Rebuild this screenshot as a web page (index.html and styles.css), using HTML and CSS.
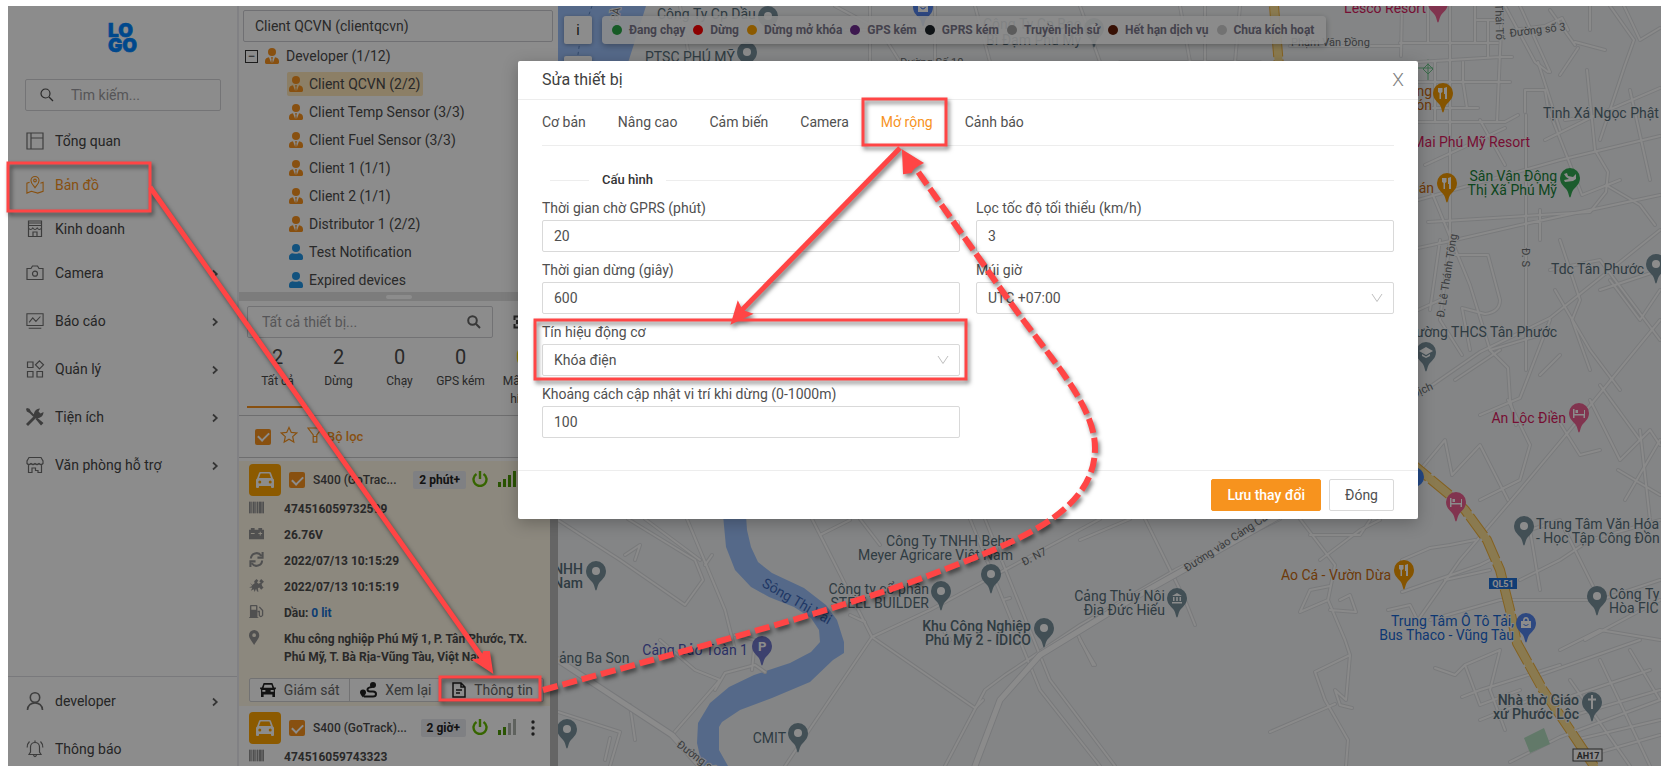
FILE: index.html
```html
<!DOCTYPE html>
<html lang="vi">
<head>
<meta charset="utf-8">
<title>Sửa thiết bị</title>
<link rel="stylesheet" href="styles.css">
</head>
<body>
<svg class="defs" aria-hidden="true">
  <symbol id="user-tie" viewBox="0 0 14 16"><circle cx="7" cy="4" r="4"/><path d="M4 9.2 6.2 15 6.6 11.3 5.9 9.3H8.1L7.4 11.3 7.8 15 10 9.2C12.600 9.500 14 11 14 13.200V14.600C14 15.500 13.500 16 12.600 16H1.400C.5 16 0 15.500 0 14.600V13.200C0 11 1.400 9.500 4 9.200Z"/></symbol>
  <symbol id="user" viewBox="0 0 14 16"><circle cx="7" cy="4" r="4"/><path d="M3.600 9.200C4.600 9.800 9.400 9.800 10.400 9.200 12.700 9.500 14 11 14 13.200V14.600C14 15.500 13.500 16 12.600 16H1.400C.5 16 0 15.500 0 14.600V13.200C0 11 1.300 9.500 3.600 9.200Z"/></symbol>
  <symbol id="chev" viewBox="0 0 8 10"><path d="M2 1.500 5.800 5 2 8.500" fill="none" stroke="currentColor" stroke-width="1.700"/></symbol>
  <symbol id="car" viewBox="0 0 18 16"><path fill-rule="evenodd" d="M4.500 0H13.500Q14.700 0 15 1L17 6.500Q18 7 18 8V15Q18 16 17 16H16Q15 16 15 15V14H3V15Q3 16 2 16H1Q0 16 0 15V8Q0 7 1 6.500L3 1Q3.300 0 4.500 0ZM4.600 1.500 3 6H15L13.400 1.500ZM3.800 8.500A1.500 1.500 0 1 0 3.800 11.500 1.500 1.500 0 1 0 3.800 8.500ZM14.200 8.500A1.500 1.500 0 1 0 14.200 11.500 1.500 1.500 0 1 0 14.200 8.500Z"/></symbol>
  <symbol id="power" viewBox="0 0 16 16"><path d="M4.500 3A6.500 6.500 0 1 0 11.500 3M8 0V8" fill="none" stroke="currentColor" stroke-width="2.400"/></symbol>
  <symbol id="barcode" viewBox="0 0 15 12"><path d="M0 0H1.500V12H0ZM2.500 0H3V12H2.500ZM4 0H5.500V12H4ZM6.500 0H7V12H6.500ZM8 0H9V12H8ZM10 0H12.500V12H10ZM13.500 0H15V12H13.500Z"/><path d="M0 0H15V12H0Z" opacity=".45"/></symbol>
  <symbol id="pin" viewBox="-11 -11 22 32" overflow="visible"><path d="M0 19.500C-1.200 19.500-1 15.500-3 12.300-5 9-10 6.500-10 0A10 10 0 0 1 10 0C10 6.500 5 9 3 12.300 1 15.500 1.200 19.500 0 19.500Z"/></symbol>
</svg>

<div class="app">
  <aside class="sidebar">
    <div class="logo">
      <svg width="32" height="32" viewBox="0 0 32 32" role="img" aria-label="Logo"><text x="1" y="15">LO</text><text x="1" y="30">GO</text></svg>
    </div>
    <label class="side-search">
      <svg width="14" height="14" viewBox="0 0 14 14" class="line"><circle cx="5.500" cy="5.500" r="4.500"/><path d="M9 9 13 13"/></svg>
      <input type="search" placeholder="Tìm kiếm..." aria-label="Tìm kiếm">
    </label>
    <nav class="menu">
      <a href="#"><svg width="18" height="18" viewBox="0 0 18 18" class="line"><path d="M1 1H17V17H1ZM5 1V17M5 6H17"/></svg><span>Tổng quan</span></a>
      <a href="#" class="active"><svg width="20" height="20" viewBox="0 0 20 20" class="line"><path d="M10 13C8.500 10.500 5.500 8.500 5.500 5A4.500 4.500 0 0 1 14.500 5C14.500 8.500 11.500 10.500 10 13Z"/><circle cx="10" cy="5" r="1.500"/><path d="M4 7 1 8V19L6 17 13 19 19 17V7L16 8"/></svg><span>Bản đồ</span></a>
      <a href="#"><svg width="18" height="18" viewBox="0 0 18 18" class="line"><path d="M2.500 1H15.500V5.500H2.500ZM2.500 3H15.500M2.500 5.500V16.500H15.500V5.500M2.500 8Q4.700 11 6.800 8 9 11 11.200 8 13.300 11 15.500 8M7 16.500V12H11V16.500"/></svg><span>Kinh doanh</span></a>
      <a href="#" class="last-short"><svg width="18" height="18" viewBox="0 0 18 18" class="line"><path d="M1 4.500H5L6.500 2H11.500L13 4.500H17V15.500H1Z"/><circle cx="9" cy="9.700" r="2.500"/></svg><span>Camera</span><svg class="chev"><use href="#chev"/></svg></a>
      <a href="#" class="tall"><svg width="20" height="18" viewBox="0 0 20 18" class="line"><path d="M1 1H19V14H1ZM3 17H17M3.500 10.500 7.500 5.500 11 9.500 16 4"/></svg><span>Báo cáo</span><svg class="chev"><use href="#chev"/></svg></a>
      <a href="#" class="tall"><svg width="18" height="18" viewBox="0 0 18 18" class="line"><path d="M1.500 2H7V7.500H1.500ZM1.500 11.500H7V17H1.500ZM11 11.500H16.500V17H11ZM13.500.8 17.500 4.800 13.500 8.800 9.500 4.800Z"/></svg><span>Quản lý</span><svg class="chev"><use href="#chev"/></svg></a>
      <a href="#" class="tall"><svg width="18" height="18" viewBox="0 0 18 18"><path d="M1 0 3.500.8 5 3.500 9 7.500 7.500 9 3.500 5 .8 3.500 0 1ZM11 9.500 17.500 15 15 17.500 9.500 11ZM0 16 8 8C7.500 4 9.500 1 14 .5L12.500 3.500 14.500 5.500 17.500 4C17.500 8 14.500 10.500 10 10L2 18Z"/></svg><span>Tiện ích</span><svg class="chev"><use href="#chev"/></svg></a>
      <a href="#" class="tall"><svg width="18" height="18" viewBox="0 0 18 18" class="line"><path d="M3 1.500H15L17 5V7.500Q15 9.500 13 7.500 11 9.500 9 7.500 7 9.500 5 7.500 3 9.500 1 7.500V5ZM2.500 9V16.500H6V12H9.500V14.500H12V16.500H15.500V9"/></svg><span>Văn phòng hỗ trợ</span><svg class="chev"><use href="#chev"/></svg></a>
    </nav>
    <nav class="menu bottom">
      <a href="#" class="tall"><svg width="18" height="18" viewBox="0 0 18 18" class="line bold"><circle cx="9" cy="5.500" r="4.700"/><path d="M1.500 18C1.500 8.500 16.500 8.500 16.500 18"/></svg><span>developer</span><svg class="chev"><use href="#chev"/></svg></a>
      <a href="#" class="tall"><svg width="18" height="18" viewBox="0 0 18 18" class="line"><path d="M3 14.500H15L13.500 12V7C13.500 1 4.500 1 4.500 7V12ZM7.500 15Q9 18.500 10.500 15M9 2V.5M3.500 1.500Q1 4 1.200 7.500M14.500 1.500Q17 4 16.800 7.500"/></svg><span>Thông báo</span></a>
    </nav>
  </aside>

  <section class="panel">
    <div class="tree-box">
      <input class="client-input" type="text" value="Client QCVN (clientqcvn)" aria-label="Khách hàng">
      <ul class="tree">
        <li class="root"><button class="expander" aria-label="Thu gọn">−</button><svg class="who"><use href="#user-tie"/></svg><span>Developer (1/12)</span></li>
        <li><div class="node selected"><svg class="who"><use href="#user-tie"/></svg><span>Client QCVN (2/2)</span></div></li>
        <li><div class="node"><svg class="who"><use href="#user-tie"/></svg><span>Client Temp Sensor (3/3)</span></div></li>
        <li><div class="node"><svg class="who"><use href="#user-tie"/></svg><span>Client Fuel Sensor (3/3)</span></div></li>
        <li><div class="node"><svg class="who"><use href="#user-tie"/></svg><span>Client 1 (1/1)</span></div></li>
        <li><div class="node"><svg class="who"><use href="#user-tie"/></svg><span>Client 2 (1/1)</span></div></li>
        <li><div class="node"><svg class="who"><use href="#user-tie"/></svg><span>Distributor 1 (2/2)</span></div></li>
        <li><div class="node"><svg class="who blue"><use href="#user"/></svg><span>Test Notification</span></div></li>
        <li><div class="node"><svg class="who blue"><use href="#user"/></svg><span>Expired devices</span></div></li>
      </ul>
    </div>
    <div class="splitter"><i></i></div>
    <div class="devices">
      <div class="device-main">
        <div class="device-search">
          <label class="device-input"><input type="search" placeholder="Tất cả thiết bị..." aria-label="Tất cả thiết bị">
            <svg width="14" height="14" viewBox="0 0 14 14"><circle cx="5.500" cy="5.500" r="4.300"/><path d="M8.800 8.800 13 13"/></svg></label>
          <svg width="20" height="14" viewBox="0 0 20 14" class="gear"><path d="M1.500 5V1.500H7M1.500 9V12.500H7M4 5V9M10 2V12"/></svg>
        </div>
        <div class="stats">
          <button class="on"><b>2</b><span>Tất cả</span></button>
          <button><b>2</b><span>Dừng</span></button>
          <button><b>0</b><span>Chạy</span></button>
          <button><b>0</b><span>GPS kém</span></button>
          <button class="warn"><b>0</b><span>Mất tín hiệu</span></button>
        </div>
        <div class="filters">
          <input type="checkbox" checked aria-label="Chọn tất cả">
          <svg width="18" height="18" viewBox="0 0 18 18"><path d="M9 1.500 11.300 6.400 16.700 7 12.700 10.600 13.800 16 9 13.300 4.200 16 5.300 10.600 1.300 7 6.700 6.400Z"/></svg>
          <svg width="16" height="16" viewBox="0 0 16 16"><path d="M1 1H15L9.800 8V15.200H6.200V8ZM6.200 9.500H9.800"/></svg>
          <span>Bộ lọc</span>
        </div>
        <article class="card chosen">
          <header>
            <span class="veh"><svg width="18" height="16"><use href="#car"/></svg></span>
            <input type="checkbox" id="d1" checked><label class="name" for="d1">S400 (GoTrac...</label>
            <span class="tag">2 phút+</span>
            <svg class="power"><use href="#power"/></svg>
            <svg class="signal" viewBox="0 0 18 16"><path d="M0 11H3V16H0ZM5 8H8V16H5ZM10 4H13V16H10ZM15 0H18V16H15Z"/></svg>
          </header>
          <dl>
            <dt><svg viewBox="0 0 15 12"><use href="#barcode"/></svg></dt><dd>474516059732599</dd>
            <dt><svg viewBox="0 0 16 12"><path d="M0 2H2V0H6V2H10V0H14V2H16V12H0ZM2 5.500V6.500H6V5.500ZM10 5.500V6.500H11.500V8H12.500V6.500H14V5.500H12.500V4H11.500V5.500Z" fill-rule="evenodd"/></svg></dt><dd>26.76V</dd>
            <dt><svg viewBox="0 0 16 16"><path d="M2 7A6 6 0 0 1 13 4M14 9A6 6 0 0 1 3 12M14.500 0V6H9M1.500 16V10H7" fill="none" stroke="currentColor" stroke-width="2.200"/></svg></dt><dd>2022/07/13 10:15:29</dd>
            <dt><svg viewBox="0 0 16 16"><path d="M1 5 3.500 7.500 6 5.500 5.500 3.500 8 1 10 3 8.500 4.500 10 6 12.500 5 11 3.500 13 1 16 4 13.500 6.500 14 8.500 15.500 10 13 12.500 11 10 9.500 11 10 15 8.500 14 7.500 11.500 6 15 5 12 2 13.500 3.500 10.500 0 10 3.500 8.500Z"/></svg></dt><dd>2022/07/13 10:15:19</dd>
            <dt><svg viewBox="0 0 16 16"><path fill-rule="evenodd" d="M1 2Q1 1 2 1H8Q9 1 9 2V14H10V15H0V14H1ZM2.500 2.500V6H7.500V2.500Z"/><path d="M9 8H11V12Q12.500 15 14.500 12V7L11 3" fill="none" stroke="currentColor" stroke-width="1.400"/></svg></dt><dd>Dầu: <a href="#">0 lit</a></dd>
            <dt><svg viewBox="0 0 16 16" class="loc"><path fill-rule="evenodd" d="M6 16C4 12 .5 9 .5 5.500A5.500 5.500 0 0 1 11.500 5.500C11.500 9 8 12 6 16ZM6 3.500A2 2 0 1 0 6 7.500 2 2 0 1 0 6 3.500Z"/></svg></dt><dd class="addr">Khu công nghiệp Phú Mỹ 1, P. Tân Phước, TX. Phú Mỹ, T. Bà Rịa-Vũng Tàu, Việt Nam</dd>
          </dl>
          <div class="actions">
            <button><svg width="16" height="14" viewBox="0 0 18 16"><path fill-rule="evenodd" d="M4 0H14L16 5H18V7H17V16H14V13H4V16H1V7H0V5H2ZM5 2 4 5.500H14L13 2ZM2.500 8V10H6V8ZM12 8V10H15.500V8Z"/></svg>Giám sát</button>
            <button><svg width="17" height="16" viewBox="0 0 17 16"><path d="M3 15.500Q0 12 0 10.500A3 3 0 0 1 6 10.500Q6 12 3 15.500Z"/><circle cx="13" cy="3" r="3"/><path d="M4 14.500H13Q16 14.500 16 12 16 9.500 13 9.500H10Q7.500 9.500 7.500 7.500 7.500 5.500 12 5" fill="none" stroke="currentColor" stroke-width="2"/></svg>Xem lại</button>
            <button><svg width="14" height="16" viewBox="0 0 14 16" class="line"><path d="M1 1H9L13 5V15H1ZM9 1V5H13M4 8H10M4 11H8"/></svg>Thông tin</button>
          </div>
        </article>
        <article class="card">
          <header>
            <span class="veh"><svg width="18" height="16"><use href="#car"/></svg></span>
            <input type="checkbox" id="d2" checked><label class="name" for="d2">S400 (GoTrack)...</label>
            <span class="tag">2 giờ+</span>
            <svg class="power"><use href="#power"/></svg>
            <svg class="signal" viewBox="0 0 18 16"><path d="M0 11H3V16H0ZM5 8H8V16H5Z"/><path class="off" d="M10 4H13V16H10ZM15 0H18V16H15Z"/></svg>
            <button class="more" aria-label="Thêm"><svg width="10" height="16" viewBox="0 0 10 16"><circle cx="5" cy="2" r="1.700"/><circle cx="5" cy="8" r="1.700"/><circle cx="5" cy="14" r="1.700"/></svg></button>
          </header>
          <dl><dt><svg viewBox="0 0 15 12"><use href="#barcode"/></svg></dt><dd>474516059743323</dd></dl>
        </article>
      </div>
      <div class="scrollbar"></div>
    </div>
  </section>

  <main class="map">
    <svg class="map-canvas" aria-label="Bản đồ">
      <defs>
        <g id="roads">
          <path d="M680 6 690 62M835 6 880 30 900 62M870 6V62M845 30H960M935 6V62M975 6 990 62M1080 6 1100 62M1180 6 1190 62M1120 62H1260M1205 6V62M1240 6 1235 62M1290 46H1400"/>
          <path d="M1450 6V240L1440 320 1462 355M1502 6 1497 122M1400 43H1498M1418 62 1500 57H1512M1418 82H1510M1418 108H1478M1418 122H1505L1518 115M1402 6 1401 56M1428 6V43M1435 62V122M1475 6V43M1488 20V57M1463 62V82L1467 108M1477 20H1498"/>
          <path d="M1505 6 1535 62 1548 72M1520 6 1550 72M1512 30 1545 26 1562 18 1568 30M1610 6 1634 40 1625 65 1600 140M1624 6 1640 40 1660 28M1550 10 1575 45M1578 48 1560 75M1590 6V30M1605 50 1575 42"/>
          <path d="M1660 88 1590 118 1545 140M1525 112V90H1545L1548 108 1582 195 1620 180M1526 115V370M1538 62 1560 130M1480 120 1505 165M1425 165 1505 128M1418 200 1560 160 1660 136M1428 222 1590 212 1606 192 1608 172 1595 150 1587 70M1606 185 1640 205 1655 225M1565 120 1620 112M1630 90 1650 180"/>
          <path d="M1418 248 1455 240 1520 225 1660 195M1430 188 1470 285 1490 350 1508 368 1510 400 1516 425M1455 255H1488L1500 300Q1500 312 1485 314L1462 308 1470 350M1418 310 1440 300M1440 240 1430 310M1540 210 1540 240M1560 240 1580 300 1572 320 1590 370"/>
          <path d="M1418 395 1480 352 1550 318 1660 230M1490 350 1540 335M1455 380 1500 350M1480 415 1520 398 1550 320M1420 470 1445 440 1452 475 1480 445 1508 500M1508 400 1530 445 1520 480 1480 500"/>
          <path d="M1418 620 1460 560 1520 490 1570 430 1660 320M1555 290 1590 350 1620 390M1540 375 1560 355M1550 270 1600 260 1660 340M1600 290 1660 270M1610 280 1640 320 1660 290M1590 400 1620 460M1600 385 1640 440M1555 415 1580 455 1600 450M1620 460 1650 430 1660 445M1625 500 1660 440M1618 470 1660 495M1640 430 1650 520"/>
          <path d="M1300 519 1335 565 1328 600 1345 640 1350 655 1315 672 1325 700 1348 740 1346 766M1350 655 1346 700 1335 690 1340 705 1352 708M1310 535H1360L1370 520M1320 560 1360 530 1380 520M1328 600 1300 612 1310 590 1330 586M1340 600 1350 595 1356 612 1330 610M1270 732 1335 704"/>
          <path d="M1402 560 1430 548 1450 545 1475 540M1402 592 1480 565 1490 560M1445 580 1490 570M1388 610 1410 605 1420 625M1430 620 1500 600H1600L1660 580M1520 580 1560 560 1590 540 1660 520M1540 590 1530 530 1560 520 1600 600M1585 640 1660 600M1560 650 1600 630 1660 640"/>
          <path d="M1435 668 1455 675 1465 665 1500 650M1465 665 1480 705 1520 690M1462 697 1480 690 1560 665M1480 720 1530 700M1500 650 1490 690 1505 730M1540 675 1640 640M1560 700 1650 670M1575 715 1660 690M1510 762 1560 737 1660 700M1575 740 1660 720M1590 755 1660 735M1600 660 1650 766M1630 650 1660 700M1570 680 1630 766"/>
          <path d="M558 520 620 560 685 605M628 519 695 560 703 580 685 605M645 519 700 560M635 560 640 545 625 555M687 519 725 610 735 650M705 565 712 555M660 640 695 670 720 680M715 690 725 673 755 665 765 672M735 635 755 640 752 670M672 735 720 680M558 712 620 732 610 766M630 705 635 740M610 738 605 760"/>
          <path d="M812 519 872 637 975 708 983 700M820 535 850 520M872 637 930 610 1100 519M785 766 872 637M970 519 1040 690 1100 766M985 519 1050 680 1115 766M850 615 865 622M950 640 940 625M1003 600 1010 598M860 519 880 545M1078 635 1093 665"/>
          <path d="M945 766 985 690 1005 675 1080 625 1175 570 1280 519M1145 519 1185 600 1195 625M1080 540 1130 519M1080 640 1095 665"/>
        </g>
      </defs>
      <g transform="translate(-558 -6)">
        <path class="water" d="M558 6H646L627 66H558ZM723 515 726 547 735 570 751 587 769 597 794 607 811 618 819 630 820 642 811 652 790 663 754 675 729 687 710 703 698 723 697 743 702 766H728L719 750V727L722 722 740 710 772 698 810 682 833 660 844 653V642L837 620 826 605 804 588 772 573 758 562 751 547 747 530 746 515Z"/>
        <path d="M592 6 580 40 577 62" class="ferry"/>
        <path class="park-line" d="M1418 68H1434M1428 59V80M1428 64 1433 69 1428 74 1423 69Z"/>
        <use href="#roads" class="casing"/><use href="#roads" class="road"/>
        <path class="park" d="M1524 738 1544 728 1550 744 1530 753Z"/>
        <g class="main-casing"><path d="M558 660 672 735 700 766M975 766 1000 700 1040 655 1130 600 1180 572 1290 510"/></g>
        <g class="main-road"><path d="M558 660 672 735 700 766M975 766 1000 700 1040 655 1130 600 1180 572 1290 510"/></g>
        <path class="hw-edge" d="M1274 6 1279 66M1410 462 1452 497 1465 510 1487 540 1500 570 1510 610 1517 643 1543 690 1570 730 1594 766"/>
        <path class="hw" d="M1274 6 1279 66M1410 462 1452 497 1465 510 1487 540 1500 570 1510 610 1517 643 1543 690 1570 730 1594 766"/>
        <circle cx="1414" cy="477" r="10" fill="#4285f4"/>

        <g class="pins slate">
          <g transform="translate(768 16)"><use href="#pin" x="-11" y="-11" width="22" height="32"/><circle r="4"/></g>
          <g transform="translate(747 52)"><use href="#pin" x="-11" y="-11" width="22" height="32"/><circle r="4"/></g>
          <g transform="translate(1094 28)"><use href="#pin" x="-11" y="-11" width="22" height="32"/><circle r="4"/></g>
          <g transform="translate(596 571)"><use href="#pin" x="-11" y="-11" width="22" height="32"/><circle r="4"/></g>
          <g transform="translate(567 729)"><use href="#pin" x="-11" y="-11" width="22" height="32"/><circle r="4"/></g>
          <g transform="translate(798 733)"><use href="#pin" x="-11" y="-11" width="22" height="32"/><circle r="4"/></g>
          <g transform="translate(941 591)"><use href="#pin" x="-11" y="-11" width="22" height="32"/><circle r="4"/></g>
          <g transform="translate(991 574)"><use href="#pin" x="-11" y="-11" width="22" height="32"/><circle r="4"/></g>
          <g transform="translate(1044 628)"><use href="#pin" x="-11" y="-11" width="22" height="32"/><circle r="4"/></g>
          <g transform="translate(1524 526)"><use href="#pin" x="-11" y="-11" width="22" height="32"/><circle r="4"/></g>
          <g transform="translate(1597 596)"><use href="#pin" x="-11" y="-11" width="22" height="32"/><circle r="4"/></g>
          <g transform="translate(1656 264)"><use href="#pin" x="-11" y="-11" width="22" height="32"/><circle r="4"/></g>
          <g transform="translate(1177 598)"><use href="#pin" x="-11" y="-11" width="22" height="32"/><path d="M-5-2 0-5 5-2ZM-5 4H5V5.500H-5ZM-4-1H-2.500V3H-4ZM-.8-1H.8V3H-.8ZM2.500-1H4V3H2.500Z"/></g>
          <g transform="translate(1426 352)"><use href="#pin" x="-11" y="-11" width="22" height="32"/><path d="M-7-1 0-5 7-1 0 3ZM-4 2 0 4.500 4 2V4L0 6-4 4Z"/></g>
          <g transform="translate(1592 702)"><use href="#pin" x="-11" y="-11" width="22" height="32"/><path d="M-1-7H1V-3.500H4V-1.500H1V7H-1V-1.500H-4V-3.500H-1Z"/></g>
        </g>
        <g class="pins pink">
          <g transform="translate(1438 3)"><use href="#pin" x="-11" y="-11" width="22" height="32"/></g>
          <g transform="translate(1579 413)"><use href="#pin" x="-11" y="-11" width="22" height="32"/><path d="M-6-4H-4.500V1H5V-3H-1V0H-3.500V-3H6V5H4.500V2.500H-4.500V5H-6Z"/></g>
          <g transform="translate(1456 502)"><use href="#pin" x="-11" y="-11" width="22" height="32"/><path d="M-6-4H-4.500V1H5V-3H-1V0H-3.500V-3H6V5H4.500V2.500H-4.500V5H-6Z"/></g>
        </g>
        <g class="pins orange">
          <g transform="translate(1443 93)"><use href="#pin" x="-11" y="-11" width="22" height="32"/><path d="M-5-5H-.5V-1L-2 0V6H-3.500V0L-5-1ZM1-5 4-6V6H2V1H1Z"/></g>
          <g transform="translate(1447 183)"><use href="#pin" x="-11" y="-11" width="22" height="32"/><path d="M-5-5H-.5V-1L-2 0V6H-3.500V0L-5-1ZM1-5 4-6V6H2V1H1Z"/></g>
          <g transform="translate(1404 570)"><use href="#pin" x="-11" y="-11" width="22" height="32"/><path d="M-5-5H-.5V-1L-2 0V6H-3.500V0L-5-1ZM1-5 4-6V6H2V1H1Z"/></g>
        </g>
        <g class="pins green"><g transform="translate(1570 178)"><use href="#pin" x="-11" y="-11" width="22" height="32"/><path d="M-6-4-3-5-2-2 3-1 6-4V1L3 3-5 4-6 2-1 1-4-1Z"/></g></g>
        <g class="pins blue"><g transform="translate(1526 623)"><use href="#pin" x="-11" y="-11" width="22" height="32"/><path fill-rule="evenodd" d="M-5-2H-3Q-3-6 0-6T3-2H5V5H-5ZM-1.500-2H1.500Q1.500-4.500 0-4.500T-1.500-2ZM-3 1Q0 5 3 1H2Q0 3-2 1Z"/></g>
          <g transform="translate(923 7)"><use href="#pin" x="-11" y="-11" width="22" height="32"/><path fill-rule="evenodd" d="M-5-3H5V5H-5ZM-3 0Q0 5 3 0H2Q0 2.500-2 0Z"/></g></g>
        <g class="pins indigo"><g transform="translate(762 646)"><use href="#pin" x="-11" y="-11" width="22" height="32"/><text x="-4" y="5">P</text></g></g>

        <g class="labels">
          <text x="657" y="19">Công Ty Cp Dầu</text><text x="645" y="62">PTSC PHÚ MỸ</text>
          <text x="983" y="29">Công Ty Cp Bao</text><text x="986" y="45">Bì Đạm Phú Mỹ</text>
          <text x="583" y="574" class="end b">NHH</text><text x="583" y="588" class="end b">Nam</text>
          <text x="559" y="663">ảng Ba Son</text><text x="786" y="743" class="end">CMIT</text>
          <text x="1013" y="546" class="end">Công Ty TNHH Behn</text><text x="1013" y="560" class="end">Meyer Agricare Việt Nam</text>
          <text x="929" y="594" class="end">Công ty cổ phần</text><text x="929" y="608" class="end">STEEL BUILDER</text>
          <text x="1031" y="631" class="end b">Khu Công Nghiệp</text><text x="1031" y="645" class="end b">Phú Mỹ 2 - IDICO</text>
          <text x="1165" y="601" class="end">Cảng Thủy Nội</text><text x="1165" y="615" class="end">Địa Đức Hiếu</text>
          <text x="1543" y="118">Tịnh Xá Ngọc Phật</text><text x="1644" y="274" class="end">Tdc Tân Phước</text>
          <text x="1557" y="337" class="end">Trường THCS Tân Phước</text>
          <text x="1536" y="529">Trung Tâm Văn Hóa</text><text x="1536" y="543">- Học Tập Công Đồn</text>
          <text x="1609" y="599">Công Ty</text><text x="1609" y="613">Hòa FIC</text>
          <text x="1579" y="705" class="end b">Nhà thờ Giáo</text><text x="1579" y="719" class="end b">xứ Phước Lộc</text>
          <g class="t-pink"><text x="1426" y="13" class="end">Lesco Resort</text><text x="1530" y="147" class="end">Mai Phú Mỹ Resort</text><text x="1566" y="423" class="end">An Lộc Điền</text></g>
          <g class="t-orange"><text x="1432" y="96" class="end">ng</text><text x="1432" y="110" class="end">ón</text><text x="1434" y="193" class="end">Quán</text><text x="1391" y="580" class="end">Ao Cá - Vườn Dừa</text></g>
          <g class="t-green"><text x="1557" y="181" class="end">Sân Vận Động</text><text x="1557" y="195" class="end">Thị Xã Phú Mỹ</text></g>
          <g class="t-blue"><text x="1514" y="626" class="end">Trung Tâm Ô Tô Tải,</text><text x="1514" y="640" class="end">Bus Thaco - Vũng Tàu</text></g>
          <g class="t-indigo"><text x="748" y="655" class="end">Cảng Bảo Toàn 1</text></g>
          <g class="t-water"><text transform="translate(761 586) rotate(30)">Sông Thị Vải</text></g>
          <g class="street">
            <text x="900" y="66">Đường Số 10</text><text x="1291" y="46">Phạm Văn Đồng</text>
            <text transform="translate(618 22) rotate(-80)">BÀ</text>
            <text transform="translate(1510 37) rotate(-7)">Đường số 3</text><text transform="translate(1495 4) rotate(88)">Thái Tổ</text>
            <text transform="translate(1522 248) rotate(90)">Đ. S</text><text transform="translate(1444 318) rotate(-81)">Đ. Lê Thánh Tông</text>
            <text transform="translate(1414 398) rotate(-25)">Dịch</text><text transform="translate(1187 572) rotate(-33)">Đường vào Cảng Cái Mép</text>
            <text transform="translate(1024 566) rotate(-27)">Đ. N7</text><text transform="translate(676 746) rotate(37)">Đường số 3</text>
          </g>
        </g>
        <rect x="1489" y="578" width="28" height="11" fill="#1f6fd6"/><text x="1503" y="587" class="shield">QL51</text>
        <rect x="1573" y="749" width="29" height="12" fill="#fff" stroke="#444"/><text x="1588" y="759" class="shield dark">AH17</text>
      </g>
    </svg>
    <div class="map-top">
      <div class="map-tools"><button>i</button><button aria-label="Lớp bản đồ"></button></div>
      <ul class="legend">
        <li><i class="c-green"></i>Đang chạy</li><li><i class="c-red"></i>Dừng</li><li><i class="c-amber"></i>Dừng mở khóa</li><li><i class="c-purple"></i>GPS kém</li><li><i class="c-black"></i>GPRS kém</li><li><i class="c-gray"></i>Truyền lịch sử</li><li><i class="c-brown"></i>Hết hạn dịch vụ</li><li><i class="c-light"></i>Chưa kích hoạt</li>
      </ul>
    </div>
  </main>

  <div class="mask">
    <form class="modal" role="dialog" aria-labelledby="dlg-title">
      <header><h1 id="dlg-title">Sửa thiết bị</h1><button type="button" aria-label="Đóng hộp thoại">X</button></header>
      <div class="body">
        <div class="tabs" role="tablist">
          <button type="button" role="tab">Cơ bản</button><button type="button" role="tab">Nâng cao</button><button type="button" role="tab">Cảm biến</button><button type="button" role="tab">Camera</button><button type="button" role="tab" aria-selected="true">Mở rộng</button><button type="button" role="tab">Cảnh báo</button>
        </div>
        <h2>Cấu hình</h2>
        <div class="fields">
          <div class="field"><label for="f1">Thời gian chờ GPRS (phút)</label><input id="f1" type="text" value="20"></div>
          <div class="field"><label for="f2">Lọc tốc độ tối thiểu (km/h)</label><input id="f2" type="text" value="3"></div>
          <div class="field"><label for="f3">Thời gian dừng (giây)</label><input id="f3" type="text" value="600"></div>
          <div class="field"><label for="f4">Múi giờ</label><div class="select"><select id="f4"><option>UTC +07:00</option></select><svg width="12" height="12" viewBox="0 0 12 12"><path d="M1 2 6 9.500 11 2"/></svg></div></div>
          <div class="field first"><label for="f5">Tín hiệu động cơ</label><div class="select"><select id="f5"><option>Khóa điện</option></select><svg width="12" height="12" viewBox="0 0 12 12"><path d="M1 2 6 9.500 11 2"/></svg></div></div>
          <div class="field first"><label for="f6">Khoảng cách cập nhật vi trí khi dừng (0-1000m)</label><input id="f6" type="text" value="100"></div>
        </div>
      </div>
      <footer><button type="submit" class="primary">Lưu thay đổi</button><button type="button">Đóng</button></footer>
    </form>
  </div>
</div>

<svg class="notes" aria-hidden="true">
  <g class="frames">
    <rect x="8" y="163" width="142" height="48"/><rect x="863" y="99" width="83" height="46"/>
    <rect x="535" y="320" width="431" height="59"/><rect x="440" y="677" width="100" height="23"/>
  </g>
  <g class="lines">
    <path d="M150 187 483 659"/><path d="M900 148 740 312"/>
    <path class="dash" d="M543 690C700 647 850 606 930 575S1095 515 1095 448C1095 405 1050 358 1010 302L914 166"/>
  </g>
  <g class="heads"><path d="M492 672 474 660 481 659 484 652 489 652Z"/><path d="M732 323 738 303 742 311 751 314Z"/><path d="M903 151 922 163 914 167 911 172 904 173Z"/></g>
</svg>
</body>
</html>
```
FILE: styles.css
```css
* { box-sizing: border-box; }
body { margin: 0; padding: 6px 5px 6px 8px; height: 100vh; background: #fff; font: 14px/22px Roboto, "Noto Sans", sans-serif; color: #4c4c4c; }
button, input, select { font: inherit; color: inherit; margin: 0; }
button { cursor: pointer; }
ul, dl, dd, h1, h2 { margin: 0; padding: 0; list-style: none; font-weight: 400; }
svg { flex: none; fill: currentColor; display: block; }
.defs { position: absolute; width: 0; height: 0; }
.line { fill: none; stroke: currentColor; stroke-width: 1.2; }
.line.bold { stroke-width: 1.6; }

.app { position: relative; height: 100%; display: flex; overflow: hidden; background: #fff; }

/* sidebar */
.sidebar { width: 231px; flex: none; display: flex; flex-direction: column; border-right: 2px solid #ececf0; }
.logo { display: flex; justify-content: center; padding: 16px 0 25px; color: #0084ff; }
.logo svg { overflow: visible; }
.logo text { font: 900 19px Inter, sans-serif; stroke: currentColor; stroke-width: 0.6; }
.side-search { display: flex; align-items: center; gap: 12px; height: 32px; margin: 0 16px 8px 17px; padding: 0 14px; border: 1px solid #d4d4d8; border-radius: 2px; }
.side-search input { width: 100%; border: 0; background: none; outline: 0; padding: 0 5px; }
::placeholder { color: #9c9ca0; opacity: 1; }
.menu { display: flex; flex-direction: column; }
.menu a { display: flex; flex: none; align-items: center; gap: 11px; height: 44px; padding: 0 18px; color: #454545; text-decoration: none; }
.menu a > svg:first-child { width: 18px; color: #707070; overflow: visible; }
.menu a span { flex: 1; }
.menu a.active, .menu a.active > svg:first-child { color: #f7931e; }
.menu .last-short { margin-bottom: 2px; }
.menu a.tall { height: 48px; }
.menu .chev { width: 8px; height: 10px; margin-top: 2px; color: #606060; }
.menu.bottom { margin-top: auto; height: 90px; flex: none; border-top: 1px solid #dddde2; }

/* client tree and devices */
.panel { width: 319px; flex: none; display: flex; flex-direction: column; }
.tree-box { height: 286px; flex: none; padding: 4px 5px 0 4px; overflow: hidden; }
.client-input { width: 100%; height: 32px; padding: 0 11px; border: 1px solid #ccccd2; border-radius: 2px; background: none; }
.tree li { display: flex; align-items: center; height: 28px; padding-left: 44px; }
.tree .root { padding-left: 2px; gap: 7px; }
.expander { width: 13px; height: 13px; padding: 0; border: 1px solid #333; background: none; line-height: 9px; }
.node { display: flex; align-items: center; gap: 6px; height: 24px; padding: 0 3px 0 2px; border-radius: 2px; }
.node.selected { background: #ffe7ba; }
.who { width: 14px; height: 16px; color: #f7931e; }
.who.blue { color: #2295e6; }
.splitter { height: 9px; flex: none; display: grid; place-items: center; background: #e2e2e2; }
.splitter i { width: 26px; height: 4px; border-radius: 2px; background: #fff; }
.devices { flex: 1; min-height: 0; display: flex; }
.device-main { flex: 1; min-width: 0; overflow: hidden; }
.scrollbar { width: 8px; background: #b9b9b9; }
.device-search { display: flex; align-items: center; gap: 20px; padding: 5px 8px 0; }
.device-input { width: 246px; flex: none; height: 32px; display: flex; align-items: center; padding: 0 11px 0 14px; border: 1px solid #d0d0d4; border-radius: 2px; }
.device-input input { width: 100%; border: 0; background: none; outline: 0; padding: 0; }
.device-input svg { fill: none; stroke: #666; stroke-width: 2; }
.gear { fill: none; stroke: #444; stroke-width: 2; }
.stats { display: flex; height: 78px; padding: 5px 8px 7px; border-bottom: 1px solid #c8c8ca; }
.stats button { width: 61px; flex: none; padding: 4px 6px 0; border: 0; border-bottom: 2px solid transparent; background: none; display: flex; flex-direction: column; font-size: 12px; line-height: 18px; }
.stats b { font-size: 20px; line-height: 20px; font-weight: 400; margin-bottom: 5px; }
.stats span, .stats b { width: 100%; text-align: center; }
.stats .on { border-color: #f7931e; }
.stats .warn b { color: #fadb14; }
.stats span { white-space: nowrap; }
.stats .warn span { white-space: normal; }
.filters { display: flex; align-items: center; gap: 9px; height: 42px; padding: 0 16px; border-bottom: 1px solid #c8c8ca; color: #f7931e; font-weight: 500; font-size: 13px; }
.filters svg { fill: none; stroke: currentColor; stroke-width: 1.2; margin-bottom: 4px; }
.filters span { margin-left: -5px; }
input[type=checkbox] { appearance: none; flex: none; width: 16px; height: 16px; border-radius: 2px; background: #f7931e; display: grid; place-items: center; }
input[type=checkbox]::after { content: ""; width: 5px; height: 9px; margin-top: -2px; border: solid #fff; border-width: 0 2px 2px 0; rotate: 45deg; }
.card { padding: 6px 6px 4px 10px; font-size: 12px; line-height: 18px; font-weight: 500; }
.card.chosen { margin-top: 3px; padding-top: 3px; background: #fff7e6; }
.card header { display: flex; align-items: center; height: 32px; gap: 8px; }
.veh { width: 32px; height: 32px; border-radius: 4px; background: #ffa500; color: #fff; display: grid; place-items: center; }
.name { flex: 1; white-space: nowrap; }
.tag { padding: 0 6px; border-radius: 2px; background: #e8e9ee; color: #222; font-weight: 700; margin-right: -2px; }
.power { width: 16px; height: 16px; color: #63b900; margin: 0 2px 2px 0; }
.signal { width: 18px; height: 16px; fill: #4e9a06; margin: 0 28px 2px 0; }
.signal .off { fill: #aeb3ac; }
.signal:not(:last-child) { margin-right: 4px; }
.more { width: 10px; margin-right: 6px; padding: 0; border: 0; background: none; color: #333; }
.card dl { display: grid; grid-template-columns: 35px 1fr; row-gap: 8px; padding-top: 4px; }
.card dt svg { width: 15px; height: 15px; color: #939393; }
.card dd { font-weight: 700; }
.card dd a { color: #1570cf; text-decoration: none; }
.card .loc { width: 16px; margin-left: -1px; }
.actions { display: flex; height: 24px; margin: 12px 0 0; border: 1px solid #cfcfd2; border-radius: 2px; background: #fff; }
.actions button { flex: auto; display: flex; align-items: center; justify-content: center; gap: 8px; padding: 0 6px; border: 0; border-left: 1px solid #cfcfd2; background: none; font-size: 14px; font-weight: 400; color: #666; }
.actions button:first-child { border-left: 0; }
.actions svg { color: #222; }
.actions .line { stroke-width: 1.5; }

/* map */
.map { position: relative; flex: 1; min-width: 0; background: #f1f3f4; overflow: hidden; }
.map-canvas { position: absolute; inset: 0; width: 100%; height: 100%; }
.water { fill: #9cc0f9; }
.ferry { fill: none; stroke: #5c86c4; stroke-dasharray: 3 3; }
.park { fill: #b2dcc0; }
.park-line { fill: none; stroke: #6fc48a; }
.casing, .road, .main-casing, .main-road, .hw, .hw-edge { fill: none; stroke-linejoin: round; stroke-linecap: round; }
.casing { stroke: #dcdee1; stroke-width: 4; }
.road { stroke: #fbfbfb; stroke-width: 2; }
.main-casing { stroke: #dadce0; stroke-width: 7; }
.main-road { stroke: #fdfdfd; stroke-width: 5; }
.hw-edge { stroke: #f0b13c; stroke-width: 10; stroke-dasharray: 24 3; stroke-linecap: butt; }
.hw { stroke: #fbdf92; stroke-width: 8; }
.pins > g > * { fill: #fff; }
.pins > g > use { fill: inherit; }
.slate > g > use { fill: #78909c; }
.pink > g > use { fill: #ec6090; }
.orange > g > use { fill: #f29900; }
.green > g > use { fill: #34a853; }
.blue > g > use { fill: #5383ec; }
.indigo > g > use { fill: #7077c8; }
.indigo text { font: 700 13px Roboto, sans-serif; }
.labels { font-size: 14px; fill: #566d79; paint-order: stroke; stroke: #f1f3f4; stroke-width: 2px; }
.labels .end { text-anchor: end; }
.labels .b { font-weight: 500; }
.t-pink { fill: #d81b60; }
.t-orange { fill: #c76a10; }
.t-green { fill: #188038; }
.t-blue { fill: #1967d2; }
.t-indigo { fill: #5058b8; }
.t-water { fill: #3a66b8; stroke: none; }
.street { font-size: 11px; fill: #6a6d70; }
.shield { font: 700 9px Roboto, sans-serif; fill: #fff; text-anchor: middle; }
.shield.dark { fill: #444; }
.map-top { position: relative; display: flex; align-items: flex-start; gap: 10px; padding: 10px 6px; }
.map-tools { display: grid; gap: 12px; }
.map-tools button { width: 28px; height: 28px; padding: 0; border: 0; border-radius: 2px; background: #fff; box-shadow: 0 1px 4px rgba(0, 0, 0, .3); color: #222; }
.legend { display: flex; align-items: center; gap: 8px; height: 28px; padding: 0 12px 0 10px; border-radius: 4px; background: rgba(255, 255, 255, .88); box-shadow: 0 2px 6px rgba(0, 0, 0, .3); font-size: 12px; font-weight: 700; color: #7c798c; white-space: nowrap; }
.legend li { display: flex; align-items: center; gap: 7px; }
.legend i { width: 10px; height: 10px; border-radius: 50%; }
.c-green { background: #28a745; }
.c-red { background: #f00; }
.c-amber { background: #ffa500; }
.c-purple { background: #6f2c91; }
.c-black { background: #1c2328; }
.c-gray { background: #a6a6a6; }
.c-brown { background: #641e08; }
.c-light { background: #cfcfcf; }

/* dialog */
.mask { position: absolute; inset: 0; padding: 55px 243px 0 510px; background: rgba(0, 0, 0, .45); }
.modal { background: #fff; border-radius: 2px; box-shadow: 0 4px 16px rgba(0, 0, 0, .25); color: #505050; }
.modal header { display: flex; justify-content: space-between; align-items: center; height: 39px; padding: 0 12px 0 24px; border-bottom: 1px solid #ededed; }
.modal h1 { font-size: 16px; color: #404040; }
.modal header button { width: 16px; padding: 0; border: 0; background: none; font-size: 19px; font-weight: 300; color: #808080; }
.modal .body { padding: 0 24px 32px; }
.tabs { display: flex; gap: 32px; height: 46px; padding-bottom: 2px; border-bottom: 1px solid #ededed; }
.tabs button { padding: 0; border: 0; background: none; }
.tabs [aria-selected] { color: #f7931e; }
.modal h2 { display: flex; align-items: center; gap: 13px; height: 24px; margin: 22px 0 6px; padding-left: 8px; font-size: 13px; font-weight: 500; color: #333; }
.modal h2::before, .modal h2::after { content: ""; height: 1px; width: 39px; background: #ededed; }
.modal h2::after { flex: 1; }
.fields { display: grid; grid-template-columns: 1fr 1fr; gap: 8px 16px; }
.field { display: grid; grid-template-rows: 22px 32px; line-height: 20px; }
.field.first { grid-column: 1; }
.field input, .field select { width: 100%; height: 32px; padding: 0 11px; border: 1px solid #d9d9d9; border-radius: 2px; background: #fff; appearance: none; }
.select { display: grid; align-items: center; }
.select > * { grid-area: 1 / 1; }
.select svg { justify-self: end; margin-right: 11px; fill: none; stroke: #bfbfbf; pointer-events: none; }
.modal footer { display: flex; justify-content: flex-end; gap: 8px; padding: 8px 24px; border-top: 1px solid #ededed; }
.modal footer button { height: 32px; padding: 0 15px; border: 1px solid #d9d9d9; border-radius: 2px; background: #fff; }
.modal footer .primary { border-color: #f7931e; background: #f7931e; color: #fff; font-weight: 500; }

/* walkthrough marks */
.notes { position: absolute; inset: 0; width: 100%; height: 100%; pointer-events: none; filter: drop-shadow(2px 3px 2px rgba(0, 0, 0, .5)); }
.frames, .lines { fill: none; stroke: #ff4545; stroke-width: 3; }
.lines { stroke-width: 5; }
.lines .dash { stroke-dasharray: 15 5; stroke-width: 6; }
.heads { fill: #ff4545; stroke: #ff4545; stroke-width: 2; }
```
